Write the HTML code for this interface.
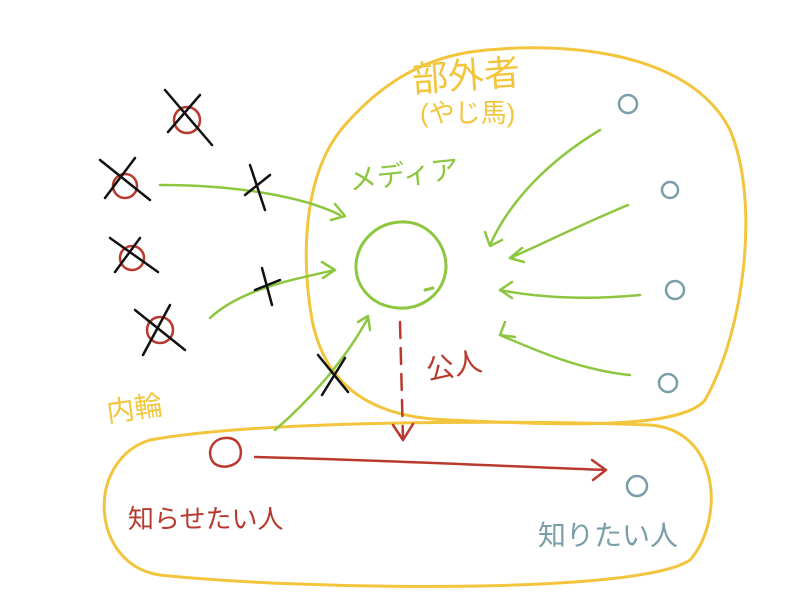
<!DOCTYPE html>
<html><head><meta charset="utf-8"><style>
html,body{margin:0;padding:0;background:#fff;width:800px;height:600px;overflow:hidden}
svg{display:block}
text{font-family:"Liberation Sans","Noto Sans CJK JP",sans-serif}
</style></head><body>
<svg width="800" height="600" viewBox="0 0 800 600" fill="none" stroke-linecap="round" stroke-linejoin="round">
<!-- big yellow blob -->
<path d="M470,52 C560,40 690,50 730,130 C760,200 745,330 705,400 C680,430 560,425 450,420 C370,418 325,385 312,320 C300,250 305,170 345,125 C380,85 420,60 470,52 Z" stroke="#f2c53d" stroke-width="3"/>
<!-- bottom yellow ellipse -->
<path d="M150,440 C260,420 520,420 650,425 C720,430 725,520 690,560 C640,595 300,590 160,575 C90,565 85,460 150,440 Z" stroke="#f2c53d" stroke-width="3"/>
<text x="413" y="92" font-size="36" fill="#f2c53d" transform="rotate(-4 413 92)">部外者</text>
<text x="420" y="122" font-size="26" fill="#f2c53d">(やじ馬)</text>
<text x="350" y="190" font-size="28" fill="#8dc63f" transform="rotate(-6 350 190)">メディア</text>
<!-- green center circle -->
<path d="M400,222 C428,220 447,245 446,268 C444,295 420,310 398,308 C372,306 355,287 356,264 C358,240 378,223 400,222 Z M425,290 l8,-2" stroke="#8dc63f" stroke-width="3"/>
<!-- right arrows -->
<g stroke="#8dc63f" stroke-width="2.5">
<path d="M600,130 C550,160 510,200 490,245"/><path d="M485,232 l5,14 l12,-6"/>
<path d="M628,205 C580,225 540,245 510,258"/><path d="M522,248 l-12,10 l14,4"/>
<path d="M640,295 C590,300 540,298 500,290"/><path d="M512,282 l-12,8 l12,8"/>
<path d="M630,375 C580,370 535,350 500,335"/><path d="M505,322 l-5,13 l15,2"/>
<path d="M160,185 C230,185 300,195 340,215"/><path d="M335,204 l10,12 l-14,4"/>
<path d="M210,318 C240,290 290,280 335,270"/><path d="M322,262 l13,8 l-12,8"/>
<path d="M275,430 C310,400 345,360 368,318"/><path d="M358,322 l10,-6 l2,14"/>
</g>
<!-- red dashed -->
<g stroke="#b83a2e" stroke-width="2.5">
<path d="M400,322 L403,440" stroke-dasharray="16,10"/><path d="M393,425 l10,15 l10,-16"/>
<path d="M255,457 C380,460 500,466 605,470"/><path d="M592,460 l14,10 l-13,10"/>
<path d="M225,438 C238,437 243,448 240,458 C236,467 220,470 213,462 C206,452 212,439 225,438 Z"/>
</g>
<text x="428" y="380" font-size="28" fill="#b83a2e" transform="rotate(-10 428 380)">公人</text>
<text x="108" y="422" font-size="28" fill="#f2c53d" transform="rotate(-8 108 422)">内輪</text>
<text x="128" y="528" font-size="26" fill="#b83a2e">知らせたい人</text>
<text x="538" y="545" font-size="28" fill="#7a9ea8">知りたい人</text>
<!-- blue circles -->
<g stroke="#7a9ea8" stroke-width="2.5">
<circle cx="628" cy="104" r="9"/><circle cx="670" cy="190" r="8"/><circle cx="675" cy="290" r="9"/><circle cx="668" cy="383" r="9"/><circle cx="637" cy="486" r="10"/>
</g>
<!-- crossed red circles -->
<g stroke="#b83a2e" stroke-width="2.5">
<circle cx="187" cy="120" r="13"/><circle cx="125" cy="186" r="12"/><circle cx="132" cy="258" r="12"/><circle cx="160" cy="330" r="13"/>
</g>
<g stroke="#111" stroke-width="2.5">
<path d="M165,90 L212,145 M200,95 L168,132"/>
<path d="M100,160 L150,200 M135,158 L105,198"/>
<path d="M110,238 L158,272 M140,238 L115,272"/>
<path d="M135,310 L185,350 M170,305 L143,355"/>
<path d="M250,165 L265,210 M245,195 L270,175"/>
<path d="M262,268 L272,305 M255,290 L280,280"/>
<path d="M318,355 L348,392 M345,358 L322,395"/>
</g>
</svg>
</body></html>
